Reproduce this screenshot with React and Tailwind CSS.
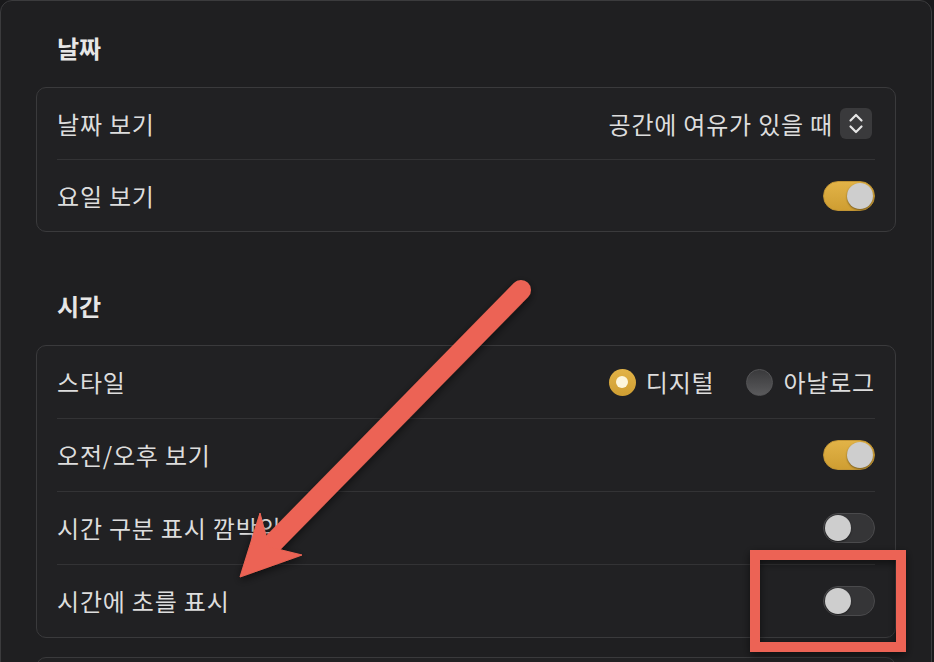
import React from 'react';

function Toggle({ on }) {
  return (
    <div
      className={`w-[52px] h-[30px] rounded-full p-[1px] flex items-center border ${
        on
          ? 'bg-gradient-to-b from-[#e2b347] to-[#cf9e32] border-[#c29534] justify-end'
          : 'bg-[#353537] border-[#4a4a4c] justify-start'
      }`}
    >
      <div className="w-[26px] h-[26px] rounded-full bg-[#cecece] shadow-[0_1px_2px_rgba(0,0,0,0.45)]" />
    </div>
  );
}

function Radio({ checked, label }) {
  return (
    <div className="flex items-center gap-[10px]">
      {checked ? (
        <div className="w-[27px] h-[27px] rounded-full bg-gradient-to-b from-[#e2b347] to-[#cf9e32] flex items-center justify-center">
          <div className="w-[12px] h-[12px] rounded-full bg-[#fdf6dc]" />
        </div>
      ) : (
        <div className="w-[27px] h-[27px] rounded-full bg-gradient-to-b from-[#3a3a3c] to-[#5a5a5c] border border-[#555557]" />
      )}
      <span>{label}</span>
    </div>
  );
}

function Stepper() {
  return (
    <div className="w-[32px] h-[31px] rounded-[6px] bg-[#3a3a3c] mr-[3px]">
      <svg width="32" height="31" viewBox="0 0 32 31" fill="none">
        <path d="M10.5 12.5 L16 7 L21.5 12.5" stroke="#e6e6e6" strokeWidth="2.2" strokeLinecap="round" strokeLinejoin="round" />
        <path d="M10.5 18.5 L16 24 L21.5 18.5" stroke="#e6e6e6" strokeWidth="2.2" strokeLinecap="round" strokeLinejoin="round" />
      </svg>
    </div>
  );
}

function Row({ label, h, children }) {
  return (
    <div className={`${h} flex items-center justify-between px-[20px] tracking-[0.8px]`}>
      <span>{label}</span>
      {children}
    </div>
  );
}

const Divider = () => <div className="mx-[20px] h-px bg-[#333335]" />;

function Heading({ children, className = '' }) {
  return (
    <div className={`h-[30px] flex items-center pl-[21px] mb-[24px] text-[24px] font-bold text-[#e6e6e6] ${className}`}>
      {children}
    </div>
  );
}

export default function App() {
  return (
    <div
      className="relative w-[934px] h-[662px] overflow-hidden bg-[#19191b] text-[24px] leading-none text-[#dddddd]"
      style={{ fontFamily: '"Noto Sans CJK KR", "Noto Sans", sans-serif' }}
    >
      <div className="w-[932px] min-h-[720px] rounded-t-[12px] border border-[#3b3b3d] bg-[#1f1f21] px-[35px] pt-[32px]">
        <Heading>날짜</Heading>
        <div className="rounded-[10px] border border-[#3a3a3c] bg-[#212123]">
          <Row label="날짜 보기" h="h-[71px]">
            <div className="flex items-center gap-[7px]">
              <span>공간에 여유가 있을 때</span>
              <Stepper />
            </div>
          </Row>
          <Divider />
          <Row label="요일 보기" h="h-[71px]">
            <Toggle on />
          </Row>
        </div>

        <Heading className="mt-[59px]">시간</Heading>
        <div className="rounded-[10px] border border-[#3a3a3c] bg-[#212123]">
          <Row label="스타일" h="h-[72px]">
            <div className="flex items-center gap-[32px]">
              <Radio checked label="디지털" />
              <Radio label="아날로그" />
            </div>
          </Row>
          <Divider />
          <Row label="오전/오후 보기" h="h-[72px]">
            <Toggle on />
          </Row>
          <Divider />
          <Row label="시간 구분 표시 깜박임" h="h-[72px]">
            <Toggle />
          </Row>
          <Divider />
          <Row label="시간에 초를 표시" h="h-[72px]">
            <Toggle />
          </Row>
        </div>

        <div className="mt-[19px] h-[80px] rounded-[10px] border border-[#3a3a3c] bg-[#212123]" />
      </div>

      <svg className="absolute inset-0 pointer-events-none" width="934" height="662" viewBox="0 0 934 662">
        <defs>
          <filter id="sh" x="-20%" y="-20%" width="140%" height="140%">
            <feDropShadow dx="0" dy="3" stdDeviation="4" floodColor="#000" floodOpacity="0.55" />
          </filter>
        </defs>
        <g filter="url(#sh)" fill="#ec6454" stroke="#ec6454">
          <line x1="521" y1="290" x2="272" y2="544" strokeWidth="20" strokeLinecap="round" />
          <polygon points="240,577 260,513 269,547 302,555" strokeWidth="1" strokeLinejoin="miter" />
          <rect x="755" y="555" width="146" height="92" fill="none" strokeWidth="10" />
        </g>
      </svg>
    </div>
  );
}
